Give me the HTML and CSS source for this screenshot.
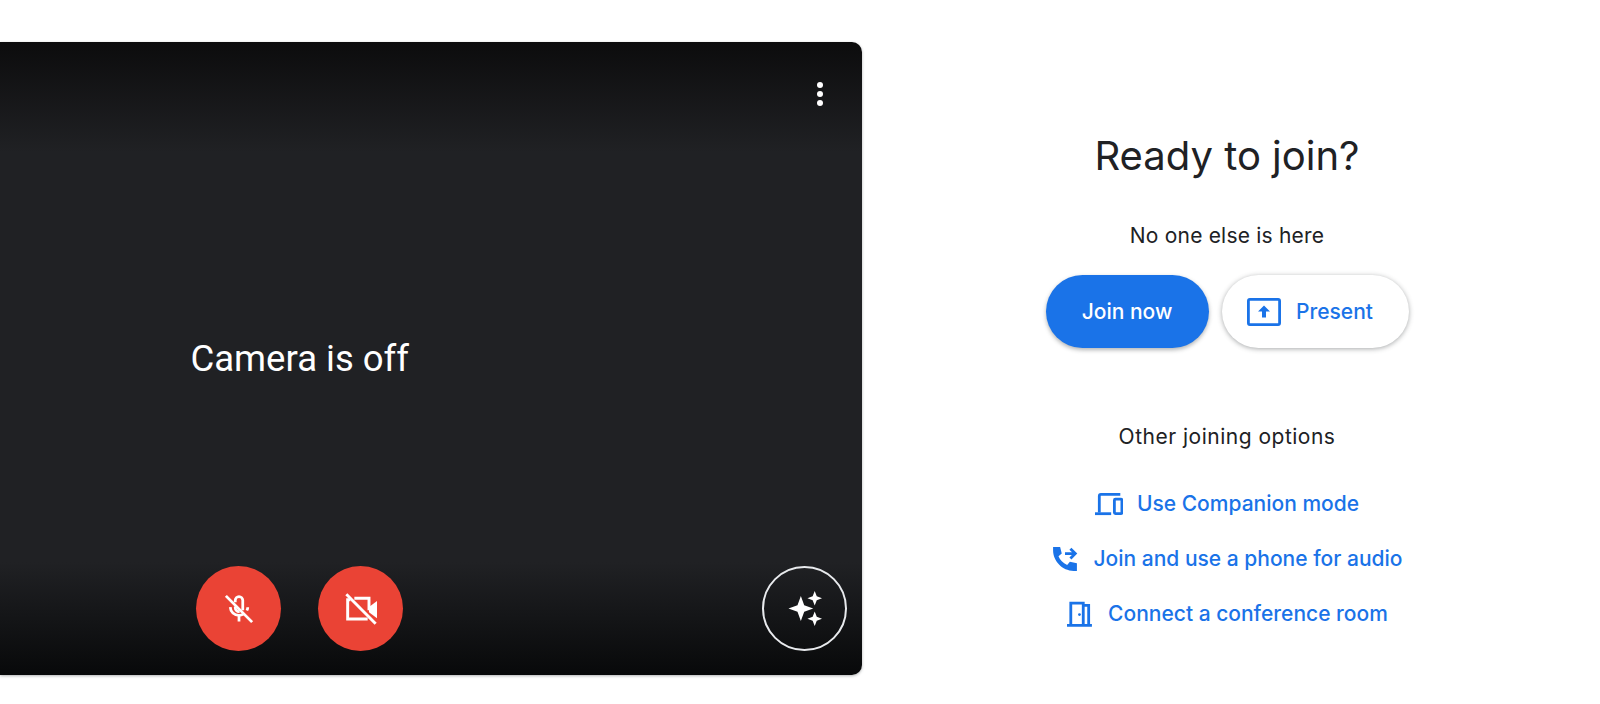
FILE: index.html
```html
<!DOCTYPE html>
<html lang="en">
<head>
<meta charset="utf-8">
<title>Ready to join?</title>
<link rel="stylesheet" href="styles.css">
</head>
<body>
<main class="page">
  <section class="video">
    <div class="video-top">
      <button class="more" aria-label="More options"><span class="dot"></span><span class="dot"></span><span class="dot"></span></button>
    </div>
    <div class="video-mid"><span class="camera-off">Camera is off</span></div>
    <div class="video-bottom">
      <div class="toggles">
        <button class="round red" aria-label="Turn on microphone">
          <svg class="ic-mic" viewBox="0 0 24 24"><path fill="none" stroke="#fff" stroke-width="2.200" d="M9 6.500V5a3 3 0 0 1 6 0v8M5 10.500c.2 3.800 3.100 6.500 7 6.500 1.300 0 2.500-.3 3.500-.9M19 10.500c0 1-.3 1.900-.7 2.700M12 17v5"/><path fill="none" stroke="#fff" stroke-width="2.200" d="M9 10v1a3 3 0 0 0 3.500 3"/><path stroke="#fff" stroke-width="2.200" d="M1.500 1.500 22.500 22.500"/></svg>
        </button>
        <button class="round red" aria-label="Turn on camera">
          <svg class="ic-cam" viewBox="0 0 24 24"><path fill="none" stroke="#fff" stroke-width="2.200" d="M4 5H2v14.500h15M7 4h11v9"/><path fill="#fff" d="M18 10.500 24 6v13l-6-4.500z"/><path stroke="#fff" stroke-width="2.200" d="M1 1 23 23"/></svg>
        </button>
      </div>
      <button class="round outline" aria-label="Apply visual effects">
        <svg class="ic-fx" viewBox="0 0 24 24"><path fill="#fff" d="M9.500 3.500 11.800 9.700 18 12l-6.200 2.300-2.300 6.200-2.300-6.200L1 12l6.200-2.300z"/><path fill="#fff" d="M19 0l1.400 3.600L24 5l-3.600 1.400L19 10l-1.400-3.600L14 5l3.600-1.400z"/><path fill="#fff" d="M19 14l1.400 3.600L24 19l-3.600 1.400L19 24l-1.400-3.600L14 19l3.600-1.400z"/></svg>
      </button>
    </div>
  </section>
  <section class="panel">
    <h1 class="title">Ready to join?</h1>
    <p class="status">No one else is here</p>
    <div class="actions">
      <button class="btn primary">Join now</button>
      <button class="btn secondary">
        <svg class="ic-present" viewBox="0 0 34 28"><rect x="1.400" y="1.400" width="31.200" height="25.200" rx="1.500" fill="none" stroke="#1a73e8" stroke-width="2.800"/><path fill="#1a73e8" d="M17 7.500l6 6h-4v6h-4v-6h-4z"/></svg>
        <span>Present</span>
      </button>
    </div>
    <h2 class="other">Other joining options</h2>
    <ul class="options">
      <li class="option">
        <svg class="ic-opt" viewBox="0 0 26 22"><path fill="none" stroke="#1a73e8" stroke-width="2.600" d="M23.500 2H5.500a1.500 1.500 0 0 0-1.500 1.500V19"/><path stroke="#1a73e8" stroke-width="2.600" d="M0 20h15"/><rect x="18" y="6.500" width="7" height="13.500" rx="1" fill="none" stroke="#1a73e8" stroke-width="2.600"/></svg>
        <span>Use Companion mode</span>
      </li>
      <li class="option">
        <svg class="ic-opt" viewBox="0 0 24 24"><path fill="#1a73e8" d="M1 1h6.500l1.500 6-3 2.500c1.500 3.500 4 6 8 8l2.500-3 6.500 1.500V23h-3C9.500 23 1 14 1 4z"/><path fill="none" stroke="#1a73e8" stroke-width="2.600" d="M12 7h9M17 2.500 21.500 7 17 11.500"/></svg>
        <span>Join and use a phone for audio</span>
      </li>
      <li class="option">
        <svg class="ic-opt" viewBox="0 0 24 24"><path fill="none" stroke="#1a73e8" stroke-width="2.600" d="M0 22.500h23M3.500 22.500V2h11.500v20.500M15 4h5v18.500"/><circle cx="11.500" cy="12.500" r="1.300" fill="#1a73e8"/></svg>
        <span>Connect a conference room</span>
      </li>
    </ul>
  </section>
</main>
</body>
</html>
```
FILE: styles.css
```css
* { box-sizing: border-box; }
html, body { margin: 0; height: 704px; overflow: hidden; background: #fff; }
.page { display: flex; height: 704px; padding-top: 42px; align-items: flex-start; }
button { border: 0; padding: 0; font: inherit; background: none; }

.video {
  width: 862px; height: 633px; flex: none;
  display: flex; flex-direction: column;
  border-radius: 0 10px 10px 0;
  background: linear-gradient(to bottom, #0c0c0d 0, #202124 110px, #202124 520px, #08090a 100%);
  box-shadow: 0 1px 3px rgba(60,64,67,.4);
  color: #fff;
}
.video-top { height: 72px; display: flex; justify-content: flex-end; padding: 40px 39px 0 0; }
.more { display: flex; flex-direction: column; gap: 3px; width: 6px; height: 24px; }
.dot { width: 6px; height: 6px; border-radius: 50%; background: #fff; }
.video-mid { flex: 1; display: flex; align-items: center; padding: 37px 0 0 190.500px; }
.camera-off { font: 400 36.500px/44px Roboto, sans-serif; }
.video-bottom { display: flex; justify-content: space-between; padding: 0 15px 24px 196px; }
.toggles { display: flex; gap: 37px; }
.round { width: 85px; height: 85px; border-radius: 50%; display: flex; align-items: center; justify-content: center; }
.red { background: #ea4335; }
.outline { border: 2px solid #e8eaed; }
.ic-mic { width: 30px; height: 30px; }
.ic-cam { width: 32px; height: 32px; }
.ic-fx { width: 35px; height: 35px; }

.panel { flex: 1; padding: 88px 8px 0 0; display: flex; flex-direction: column; align-items: center; }
.title { margin: 0; font: 400 40px/52px Inter, sans-serif; color: #202124; }
.status { margin: 40px 0 0; font: 400 21px/28px Inter, sans-serif; letter-spacing: .2px; color: #202124; }
.actions { display: flex; gap: 13px; margin-top: 25px; }
.btn { height: 73px; border-radius: 37px; font: 500 21px/28px Inter, sans-serif; display: flex; align-items: center; justify-content: center; }
.primary { width: 163px; background: #1a73e8; color: #fff; box-shadow: 0 2px 4px rgba(60,64,67,.4); }
.secondary { width: 187px; gap: 15px; padding-right: 10px; background: #fff; color: #1a73e8; box-shadow: 0 1px 5px rgba(60,64,67,.45); }
.ic-present { width: 34px; height: 28px; }
.other { margin: 75px 0 0; font: 400 21px/28px Inter, sans-serif; letter-spacing: .5px; color: #202124; }
.options { list-style: none; margin: 39px 0 0; padding: 0; display: flex; flex-direction: column; gap: 27px; }
.option { height: 28px; display: flex; align-items: center; justify-content: center; gap: 14px; font: 500 21px/28px Inter, sans-serif; color: #1a73e8; }
.ic-opt { width: 28px; height: 26px; }
```
